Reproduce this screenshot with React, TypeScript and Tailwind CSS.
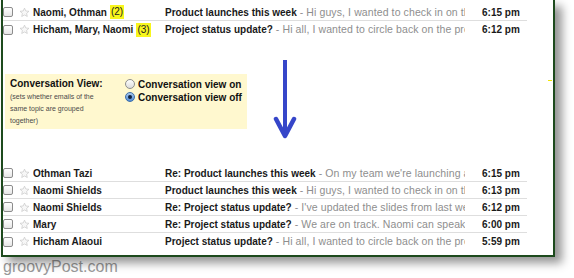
import React from "react";

type Row = {
  name: string;
  badge?: string;
  subject: string;
  snippet: string;
  time: string;
};

const topRows: Row[] = [
  { name: "Naomi, Othman", badge: "(2)", subject: "Product launches this week", snippet: "Hi guys, I wanted to check in on th", time: "6:15 pm" },
  { name: "Hicham, Mary, Naomi", badge: "(3)", subject: "Project status update?", snippet: "Hi all, I wanted to circle back on the pro", time: "6:12 pm" },
];

const bottomRows: Row[] = [
  { name: "Othman Tazi", subject: "Re: Product launches this week", snippet: "On my team we're launching a", time: "6:15 pm" },
  { name: "Naomi Shields", subject: "Product launches this week", snippet: "Hi guys, I wanted to check in on th", time: "6:13 pm" },
  { name: "Naomi Shields", subject: "Re: Project status update?", snippet: "I've updated the slides from last we", time: "6:12 pm" },
  { name: "Mary", subject: "Re: Project status update?", snippet: "We are on track. Naomi can speak", time: "6:00 pm" },
  { name: "Hicham Alaoui", subject: "Project status update?", snippet: "Hi all, I wanted to circle back on the pro", time: "5:59 pm" },
];

function Checkbox() {
  return (
    <span className="block w-[10px] h-[10px] shrink-0 rounded-[2px] border border-[#8c8c8c] bg-gradient-to-b from-white to-[#e6e6e6]" />
  );
}

function Star() {
  return (
    <svg width="11" height="11" viewBox="0 0 24 24" className="shrink-0">
      <path
        d="M12 2.5l2.9 6.2 6.8.7-5.1 4.6 1.5 6.7L12 17.3l-6.1 3.4 1.5-6.7-5.1-4.6 6.8-.7z"
        fill="#f7f7f7"
        stroke="#c9c9c9"
        strokeWidth="1.6"
        strokeLinejoin="round"
      />
    </svg>
  );
}

function MailRow({ row, last }: { row: Row; last?: boolean }) {
  return (
    <div
      className={
        "flex items-center h-[17px] w-[524px] text-[10px] leading-[17px] " +
        (last ? "" : "border-b border-[#dedede]")
      }
    >
      <Checkbox />
      <span className="ml-[6px]">
        <Star />
      </span>
      <div className="ml-[3px] w-[132px] shrink-0 flex items-center whitespace-nowrap overflow-hidden">
        <span className="font-bold text-[#1a1a1a]">{row.name}</span>
        {row.badge && (
          <span className="ml-[3px] px-[1px] h-[14px] leading-[14px] bg-[#f8f61c] text-[#222]">{row.badge}</span>
        )}
      </div>
      <div className="w-[300px] shrink-0 whitespace-nowrap overflow-hidden">
        <span className="font-bold text-[#1a1a1a]">{row.subject}</span>
        <span className="text-[#8e8e8e] text-[10.5px] tracking-[0.1px]"> - {row.snippet}</span>
      </div>
      <div className="ml-[17px] font-bold text-[#1a1a1a] whitespace-nowrap">{row.time}</div>
    </div>
  );
}

function Radio({ checked }: { checked?: boolean }) {
  if (checked) {
    return (
      <span className="flex items-center justify-center w-[10px] h-[10px] rounded-full border border-[#3d6ea8] bg-gradient-to-b from-[#a9c9ee] to-[#4f8ad6]">
        <span className="block w-[4px] h-[4px] rounded-full bg-[#10213d]" />
      </span>
    );
  }
  return (
    <span className="block w-[10px] h-[10px] rounded-full border border-[#8e8e8e] bg-gradient-to-b from-white to-[#dcdcdc]" />
  );
}

export default function App() {
  return (
    <div
      className="w-[574px] h-[278px] bg-white overflow-hidden"
      style={{ fontFamily: '"Liberation Sans", Arial, Helvetica, sans-serif' }}
    >
      <div className="relative ml-[1px] w-[554px] h-[257px] border-2 border-t-0 border-[#1d4a1d] bg-white shadow-[7px_6px_9px_rgba(0,0,0,0.42)] flex flex-col">
        <div className="pt-[4px] flex flex-col">
          {topRows.map((r, i) => (
            <MailRow key={i} row={r} last={i === topRows.length - 1} />
          ))}
        </div>

        <div className="h-[127px] flex items-start">
          <div className="ml-[2px] mt-[36px] w-[242px] h-[55px] bg-[#fff8cf] flex pl-[5px] pt-[4px]">
            <div className="w-[115px] shrink-0">
              <div className="text-[10px] leading-[12px] font-bold text-[#111]">Conversation View:</div>
              <div className="mt-[1px] text-[7px] leading-[12px] text-[#4a4a4a]">
                (sets whether emails of the
                <br />
                same topic are grouped
                <br />
                together)
              </div>
            </div>
            <div className="flex flex-col gap-[1px]">
              <div className="flex items-center h-[12px] gap-[3px]">
                <Radio />
                <span className="text-[10px] font-bold text-[#111]">Conversation view on</span>
              </div>
              <div className="flex items-center h-[12px] gap-[3px]">
                <Radio checked />
                <span className="text-[10px] font-bold text-[#111]">Conversation view off</span>
              </div>
            </div>
          </div>
          <svg width="24" height="80" viewBox="0 0 24 80" className="ml-[26px] mt-[22px] shrink-0">
            <line x1="12" y1="0" x2="12" y2="76" stroke="#3646c9" strokeWidth="4" />
            <polyline
              points="3,59 12,76 21,59"
              fill="none"
              stroke="#3646c9"
              strokeWidth="4.5"
              strokeLinecap="round"
              strokeLinejoin="round"
            />
          </svg>
        </div>

        <div className="flex flex-col">
          {bottomRows.map((r, i) => (
            <MailRow key={i} row={r} last={i === bottomRows.length - 1} />
          ))}
        </div>

        <span className="absolute left-[545px] top-[80px] w-[4px] h-[1px] bg-[#f2e600]" />
      </div>
      <div className="ml-[3px] mt-[2px] text-[16px] leading-[16px] text-[#999]">groovyPost.com</div>
    </div>
  );
}
